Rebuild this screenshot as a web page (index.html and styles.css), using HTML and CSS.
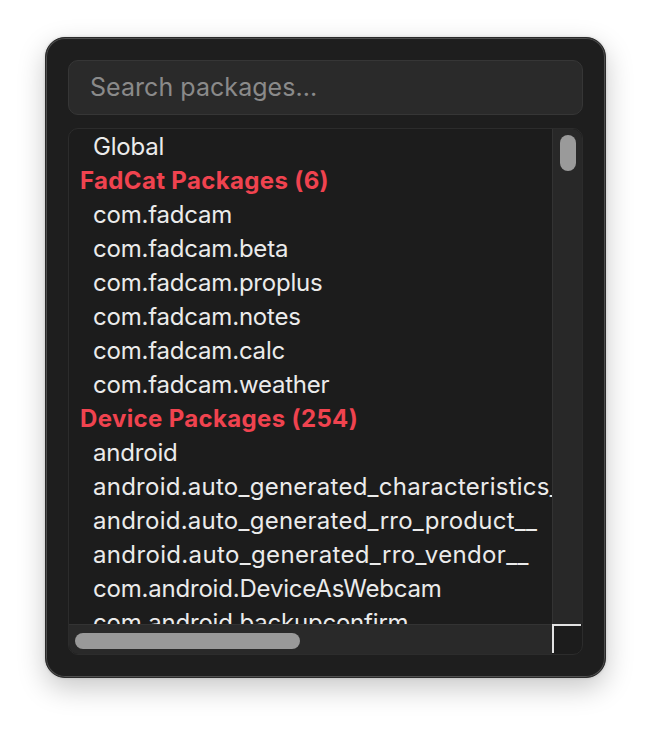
FILE: index.html
```html
<!DOCTYPE html>
<html>
<head>
<meta charset="utf-8">
<link rel="stylesheet" href="styles.css">
</head>
<body>
<div class="window">
  <div class="search">Search packages...</div>
  <div class="list">
    <div class="content">
      <div class="row item">Global</div>
      <div class="row head">FadCat Packages (6)</div>
      <div class="row item">com.fadcam</div>
      <div class="row item">com.fadcam.beta</div>
      <div class="row item">com.fadcam.proplus</div>
      <div class="row item">com.fadcam.notes</div>
      <div class="row item">com.fadcam.calc</div>
      <div class="row item">com.fadcam.weather</div>
      <div class="row head">Device Packages (254)</div>
      <div class="row item">android</div>
      <div class="row item wide">android.auto_generated_characteristics_</div>
      <div class="row item wide">android.auto_generated_rro_product__</div>
      <div class="row item wider">android.auto_generated_rro_vendor__</div>
      <div class="row item">com.android.DeviceAsWebcam</div>
      <div class="row item">com.android.backupconfirm</div>
    </div>
    <div class="vbar"><div class="vthumb"></div></div>
    <div class="hbar"><div class="hthumb"></div></div>
    <div class="corner"></div>
  </div>
</div>
</body>
</html>
```
FILE: styles.css
```css
html, body {
  margin: 0;
  padding: 0;
  background: #ffffff;
}
body {
  box-sizing: border-box;
  min-height: 732px;
  padding: 37px 0 54px 45px;
  font-family: Inter, "Liberation Sans", sans-serif;
}
.window {
  box-sizing: border-box;
  width: 561px;
  height: 641px;
  background: #1e1e1e;
  border: 1px solid #2b2b2b;
  border-radius: 20px;
  box-shadow: inset 0 0 0 1px #4f4f4f, 0 10px 28px rgba(0, 0, 0, 0.22), 0 0 3px rgba(0, 0, 0, 0.15);
  padding: 22px 22px;
  display: flex;
  flex-direction: column;
  gap: 13px;
}
.search {
  box-sizing: border-box;
  height: 55px;
  background: #2a2a2a;
  border: 1px solid #363636;
  border-radius: 10px;
  color: #8a8a8a;
  font-size: 25px;
  line-height: 53px;
  padding-left: 21px;
  letter-spacing: 0.05px;
}
.list {
  box-sizing: border-box;
  height: 527px;
  border: 1px solid #2c2c2c;
  border-radius: 10px;
  background: #1c1c1c;
  display: grid;
  grid-template-columns: 1fr 30px;
  grid-template-rows: 1fr 30px;
  overflow: hidden;
}
.content {
  overflow: hidden;
  padding-top: 1px;
  min-width: 0;
}
.row {
  height: 34px;
  line-height: 34px;
  white-space: nowrap;
  font-size: 24px;
}
.item {
  color: #ebebeb;
  padding-left: 24px;
  letter-spacing: -0.2px;
}
.item.wide {
  letter-spacing: 0.25px;
}
.item.wider {
  letter-spacing: 0.35px;
}
.head {
  color: #f0434f;
  font-weight: 700;
  padding-left: 11px;
  letter-spacing: 0.35px;
}
.vbar {
  background: #282828;
  border-left: 1px solid #333333;
  border-top-right-radius: 9px;
  padding: 6px 0 0 7px;
}
.vthumb {
  width: 16px;
  height: 36px;
  border-radius: 8px;
  background: #9a9a9a;
}
.hbar {
  background: #292929;
  border-top: 1px solid #333333;
  padding: 8px 0 0 6px;
}
.hthumb {
  width: 225px;
  height: 16px;
  border-radius: 8px;
  background: #999999;
}
.corner {
  background: #1c1c1c;
  border-left: 2px solid #e2e2e2;
  border-top: 2px solid #e2e2e2;
  margin-right: 1px;
  margin-bottom: 1px;
}
```
